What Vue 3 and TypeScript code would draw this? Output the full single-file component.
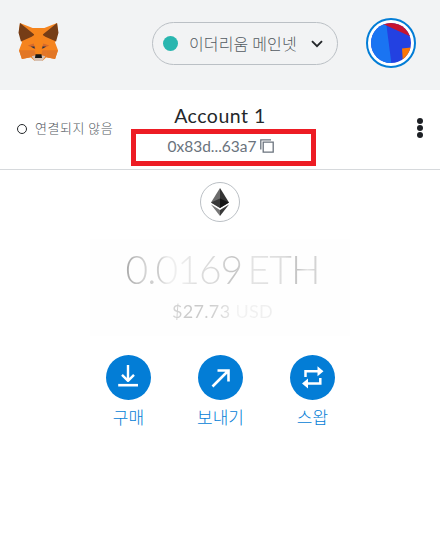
<script setup lang="ts">
interface Action {
  id: 'buy' | 'send' | 'swap'
  label: string
}

const network = '이더리움 메인넷'
const account = { name: 'Account 1', address: '0x83d...63a7' }
const actions: Action[] = [
  { id: 'buy', label: '구매' },
  { id: 'send', label: '보내기' },
  { id: 'swap', label: '스왑' },
]
</script>

<template>
  <div class="wallet">
    <header class="topbar">
      <svg class="fox" viewBox="0 0 42 40" aria-hidden="true">
        <path fill="#f5841f" d="M2 0 15 5H27L40 0 41 9 38 20 41 28 38 37 29 35 25 39H17L13 35 4 37 1 28 4 20 1 9Z" />
        <path fill="#763d16" d="M2 0 17 12 14 14 3 19 .5 10ZM40 0 25 12 28 14 39 19 41.5 10Z" />
        <path fill="#e27625" d="M1 28H12L13 35 4 37ZM41 28H30L29 35 38 37Z" />
        <path fill="#f6851b" d="M15 6H27L25 14 24 32H18L17 14Z" />
        <path fill="#d5692b" d="M10 23 16 21 18 27ZM32 23 26 21 24 27Z" />
        <path fill="#e2762a" d="M12 28 17 28 18 33 13 35ZM30 28 25 28 24 33 29 35Z" />
        <path fill="#233447" d="M13 24 17 24 17 26.5ZM29 24 25 24 25 26.5Z" />
        <path fill="#d7c1b3" d="M14 34 18 33 19 36H23L24 33 28 34 25 39H17Z" />
        <path fill="#161616" d="M18 32H24L24.6 36H17.4Z" />
      </svg>
      <button class="network" type="button">
        <span class="network-dot"></span>
        <span class="network-name">{{ network }}</span>
        <svg class="chevron" viewBox="0 0 12 8" aria-hidden="true">
          <path d="M1 1.2 6 6.2 11 1.2" fill="none" stroke="#24272a" stroke-width="1.9" />
        </svg>
      </button>
      <svg class="avatar" viewBox="0 0 50 50" aria-hidden="true">
        <defs><clipPath id="face"><circle cx="25" cy="25" r="20" /></clipPath></defs>
        <circle cx="25" cy="25" r="24" fill="#fff" stroke="#037dd6" stroke-width="2" />
        <g clip-path="url(#face)">
          <path fill="#2341e1" d="M0 0H50V50H0Z" />
          <path fill="#1a74f2" d="M0 0H19.5L26 50H0Z" />
          <path fill="#c71430" d="M15 5 50 21V0H15Z" />
          <path fill="#fb7606" d="M36 30.5 50 29V46H37Z" />
        </g>
      </svg>
    </header>

    <section class="account">
      <div class="status"><span class="status-ring"></span><span class="status-text">연결되지 않음</span></div>
      <div class="identity">
        <div class="name">{{ account.name }}</div>
        <div class="address">
          <span>{{ account.address }}</span>
          <svg class="copy" viewBox="0 0 14 14" aria-hidden="true">
            <path d="M.8 10.5V.8H11M3.2 3.2H13.2V13.2H3.2Z" fill="none" stroke="#6a737d" stroke-width="1.3" />
          </svg>
        </div>
      </div>
      <div class="menu"><i></i><i></i><i></i></div>
      <div class="highlight"></div>
    </section>

    <main class="overview">
      <div class="token">
        <svg viewBox="0 0 18 28" aria-hidden="true">
          <path fill="#6b6b6b" d="M9 0 0 14.5 9 20Z" />
          <path fill="#343434" d="M9 0 18 14.5 9 20Z" />
          <path fill="#393939" d="M0 14.5 9 10.5V20Z" />
          <path fill="#151515" d="M18 14.5 9 10.5V20Z" />
          <path fill="#777" d="M0 16.5 9 22V28Z" />
          <path fill="#393939" d="M18 16.5 9 22V28Z" />
        </svg>
      </div>
      <div class="balance">
        <div class="primary">0.0169 ETH</div>
        <div class="secondary">$27.73 USD</div>
      </div>
      <nav class="actions">
        <button v-for="action in actions" :key="action.id" class="action" type="button">
          <svg class="action-icon" viewBox="0 0 45 45" aria-hidden="true">
            <circle cx="22.5" cy="22.5" r="22.5" fill="#037dd6" />
            <g v-if="action.id === 'buy'" fill="none" stroke="#fff" stroke-width="2.4">
              <path d="M22 10V25.5M16 19.8 22 25.8 28 19.8" stroke-linejoin="round" />
              <path d="M12.2 30.2H32" stroke-width="2.6" />
            </g>
            <path v-else-if="action.id === 'send'" d="M14.5 31.5 30 16M19.5 15.5H30.5V26.5" fill="none" stroke="#fff" stroke-width="2.6" />
            <g v-else fill="#fff">
              <path d="M15.5 22V16.3H28.5M30.3 23V28.5H17" fill="none" stroke="#fff" stroke-width="2.5" />
              <path d="M27.5 11.3 33.5 16.3 27.5 21.3ZM18 23.4 12 28.5 18 33.5Z" />
            </g>
          </svg>
          <span>{{ action.label }}</span>
        </button>
      </nav>
    </main>
  </div>
</template>

<style>
body { margin: 0; background: #fff; }
</style>

<style scoped>
.wallet {
  width: 440px;
  height: 533px;
  overflow: hidden;
  background: #fff;
  color: #24272a;
  font-family: "Noto Sans CJK KR", sans-serif;
}
button { appearance: none; border: 0; padding: 0; background: none; font-family: inherit; }
svg { display: block; flex: none; }
.topbar {
  box-sizing: border-box;
  height: 90px;
  padding: 18px 24px 22px 18px;
  display: flex;
  align-items: flex-start;
  background: #f2f3f4;
}
.fox { width: 41px; height: 39px; margin-top: 5px; }
.network {
  box-sizing: border-box;
  width: 186px;
  height: 43px;
  margin: 4px 28px 0 93px;
  padding: 0 14px 0 10px;
  display: flex;
  align-items: center;
  border: 1px solid #bbc0c5;
  border-radius: 22px;
}
.network-dot { width: 15px; height: 15px; border-radius: 50%; background: #29b6af; }
.network-name {
  margin: -2px 0 0 11px;
  white-space: nowrap;
  color: #535a61;
  font-size: 16px;
  font-weight: 300;
  line-height: 20px;
  letter-spacing: .15px;
}
.chevron { width: 12px; height: 8px; margin-left: auto; }
.avatar { width: 50px; height: 50px; }
.account {
  position: relative;
  box-sizing: border-box;
  height: 80px;
  display: grid;
  grid-template-columns: 131px 178px 131px;
  border-bottom: 1px solid #d6d9dc;
}
.status { display: flex; align-items: center; height: 76px; padding-left: 17px; }
.status-ring { box-sizing: border-box; width: 10px; height: 10px; border: 1.4px solid #24272a; border-radius: 50%; margin-top: 2px; }
.status-text { margin: -2px 0 0 8px; color: #535a61; font-size: 13px; font-weight: 300; white-space: nowrap; letter-spacing: .5px; }
.identity { display: flex; flex-direction: column; align-items: center; padding-top: 13px; font-family: Lato, sans-serif; }
.name { font-size: 19.5px; line-height: 25px; letter-spacing: .5px; color: #24272a; }
.address { display: flex; align-items: center; gap: 3px; margin-top: 8px; padding-left: 1px; font-size: 15.5px; line-height: 20px; color: #6a737d; }
.copy { width: 14px; height: 14px; }
.menu { display: flex; flex-direction: column; gap: 1px; justify-self: end; padding: 28px 17px 0 0; }
.menu i { width: 6px; height: 6px; border-radius: 50%; background: #1d2025; }
.highlight { position: absolute; box-sizing: border-box; left: 131px; top: 39px; width: 185px; height: 37px; border: 5px solid #ed1c24; }
.overview { display: flex; flex-direction: column; align-items: center; padding-top: 12px; }
.token {
  box-sizing: border-box;
  width: 40px;
  height: 40px;
  display: flex;
  align-items: center;
  justify-content: center;
  border: 1px solid #bbc0c5;
  border-radius: 50%;
}
.token svg { width: 18px; height: 28px; }
.balance {
  box-sizing: border-box;
  width: 260px;
  height: 97px;
  margin-top: 17px;
  padding: 6px 0 0 5px;
  display: flex;
  flex-direction: column;
  align-items: center;
  background: #fefefe;
  font-family: Lato, sans-serif;
  white-space: nowrap;
}
.primary {
  font-size: 39px;
  font-weight: 300;
  line-height: 48px;
  letter-spacing: -.9px;
  word-spacing: -4.5px;
  color: transparent;
  background: linear-gradient(90deg, #aaa 0, #d3d3d3 10%, #ccc 17%, #eee 22%, #eee 29%, #ddd 37%, #d8d8d8 48%, #c4c4c4 56%, #e4e4e4 66%, #ddd 82%, #c4c4c4 89%, #e5e5e5 94%, #ccc);
  background-clip: text;
}
.secondary {
  margin-top: 5px;
  font-size: 18px;
  line-height: 26px;
  letter-spacing: .35px;
  color: transparent;
  background: linear-gradient(90deg, #d5d5d5, #c8c8c8 20%, #d0d0d0 40%, #e0e0e0 55%, #f3f3f3 62%, #eee);
  background-clip: text;
}
.actions { display: grid; grid-template-columns: repeat(3, 92px); margin-top: 19px; padding-left: 1px; }
.action { display: flex; flex-direction: column; align-items: center; color: #037dd6; font-size: 17px; font-weight: 300; line-height: 24px; }
.action-icon { width: 45px; height: 45px; margin-bottom: 5px; }
</style>
